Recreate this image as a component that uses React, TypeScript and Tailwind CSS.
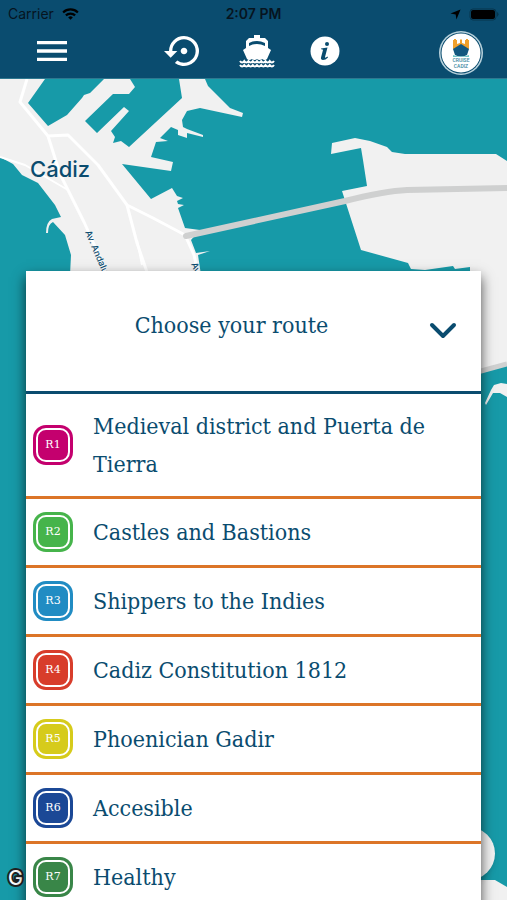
import { IoMdMenu } from "react-icons/io";
import { MdSettingsBackupRestore } from "react-icons/md";

interface Route {
  code: string;
  name: string;
  badge: string;
}

const ROUTES: Route[] = [
  { code: "R1", name: "Medieval district and Puerta de Tierra", badge: "bg-[#c4006e]" },
  { code: "R2", name: "Castles and Bastions", badge: "bg-[#46b44b]" },
  { code: "R3", name: "Shippers to the Indies", badge: "bg-[#218cc3]" },
  { code: "R4", name: "Cadiz Constitution 1812", badge: "bg-[#d83d2b]" },
  { code: "R5", name: "Phoenician Gadir", badge: "bg-[#d6cb1b]" },
  { code: "R6", name: "Accesible", badge: "bg-[#1b4896]" },
  { code: "R7", name: "Healthy", badge: "bg-[#398648]" },
];

function StatusBar() {
  return (
    <div className="grid h-7 grid-cols-3 items-center px-2 font-[Inter,sans-serif] text-sm text-[#06141f]">
      <div className="flex items-center gap-2">
        <span>Carrier</span>
        <svg viewBox="0 0 18 13" className="h-3 w-[17px]" fill="none" stroke="black" strokeWidth="2.4">
          <path d="M1 4.8a11.5 11.5 0 0 1 16 0" />
          <path d="M4 8a7.2 7.2 0 0 1 10 0" />
          <path d="M6.5 10.2a3.6 3.6 0 0 1 5 0L9 12.8z" fill="black" stroke="none" />
        </svg>
      </div>
      <span className="text-center font-semibold">2:07 PM</span>
      <div className="flex items-center justify-end gap-2">
        <svg viewBox="0 0 12 12" className="size-[11px]">
          <path d="M11.5.5 7 11.5 6.2 6 .5 5z" fill="black" />
        </svg>
        <svg viewBox="0 0 30 13" className="h-[13px] w-[30px]">
          <rect x="1" y="1" width="26" height="11" rx="3" fill="none" stroke="#06354d" />
          <rect x="2" y="2" width="24" height="9" rx="2" fill="black" />
          <path d="M28 4q3 2 0 5z" fill="#06354d" />
        </svg>
      </div>
    </div>
  );
}

function ShipIcon() {
  return (
    <svg viewBox="0 0 36 34" className="h-[34px] w-9" fill="none">
      <path
        fill="white"
        d="M15 1h6v3h5l3 3v7l3 2-4 9q-2 2-5 0-2.500 2-5 0-2.500 2-5 0-3 2-5 0L4 16l3-2V7l3-3h5z"
      />
      <path d="M10 12V9q8-4 16 0v3q-8-4-16 0z" fill="#0a4c6f" />
      <path
        stroke="white"
        strokeWidth="2"
        d="M1 27q2 3 4.250 0 2.125 3 4.250 0 2.125 3 4.250 0 2.125 3 4.250 0 2.125 3 4.250 0 2.125 3 4.250 0 2.125 3 4.250 0 2.125 3 4.250 0M1 31q2 3 4.250 0 2.125 3 4.250 0 2.125 3 4.250 0 2.125 3 4.250 0 2.125 3 4.250 0 2.125 3 4.250 0 2.125 3 4.250 0 2.125 3 4.250 0"
      />
    </svg>
  );
}

function InfoIcon() {
  return (
    <svg viewBox="0 0 30 30" className="size-[30px]">
      <circle cx="15" cy="15" r="14.500" fill="white" />
      <circle cx="17" cy="8" r="2" fill="#0a4c6f" />
      <path d="M11 12.500 17.500 11.500 15 21q0 1.500 2.500-.5l.5 1q-2.500 2.500-5 2.500-2.500-.5-2-2.500l2-7.500q0-1-2-.8z" fill="#0a4c6f" />
    </svg>
  );
}

function Logo() {
  return (
    <svg viewBox="0 0 44 44" className="size-11">
      <circle cx="22" cy="22" r="22" fill="#b9d2dc" />
      <circle cx="22" cy="22" r="20.500" fill="#0a4c6f" />
      <circle cx="22" cy="22" r="19.500" fill="white" />
      <path d="M14 18V9h1V8h2v1h1v4l3-1V9l1-1 1 1v3l3 1V9h1V8h2v1h1v9z" fill="#f0a02c" />
      <path d="m22 13 8 5-2 6q-6 3-12 0l-2-6z" fill="#12577f" />
      <path d="M14 24q8 3 16 0v2H14z" fill="#6cc4c6" />
      <g fill="#3987a0" fontFamily="Roboto, sans-serif" fontSize="5" fontWeight="500" textAnchor="middle">
        <text x="22" y="31">CRUISE</text>
        <text x="22" y="37">CADIZ</text>
      </g>
    </svg>
  );
}

function Toolbar() {
  return (
    <nav className="flex h-[50px] items-center justify-between pr-6 pl-8 text-white">
      <button type="button" aria-label="Menu" className="pb-1">
        <IoMdMenu size={40} />
      </button>
      <div className="mr-2 flex items-center gap-[35px] pb-1">
        <button type="button" aria-label="Restart route">
          <MdSettingsBackupRestore size={40} />
        </button>
        <button type="button" aria-label="Cruises">
          <ShipIcon />
        </button>
        <button type="button" aria-label="Information">
          <InfoIcon />
        </button>
      </div>
      <a href="#home" aria-label="Cruise Cadiz">
        <Logo />
      </a>
    </nav>
  );
}

function CityMap() {
  return (
    <svg
      viewBox="0 79 507 821"
      preserveAspectRatio="xMinYMin slice"
      className="absolute inset-0 size-full"
      aria-hidden="true"
    >
      {/* Old town and harbour */}
      <path
        fill="#f1f1f1"
        d="M0 79H205L208 86 230 108 243 113 242 117 200 108 187 111 182 120 183 127 187 129 203 135 203 137 187 133V138L178 135V130L171 127 160 138 168 141 156 142 151 157 173 162 171 171 122 164 151 199 172 188 177 196 183 198 177 201 178 204 184 205 178 208 185 228 200 230 191 240 196 253 210 251 198 255 201 275H70L71 255 65 235 53 222Q48 224 48 233H46Q46 222 52 219L61 217 55 205 38 183 22 175 13 164 0 157Z"
      />
      <path
        fill="#179aa8"
        d="M45 79 28 103 48 126 67 115 82 98 84 95 90 93 104 79ZM130 79 135 87 129 94H113L85 121 97 133 124 107 129 111 111 131 115 137 113 143 121 141 129 147 182 98 179 79Z"
      />
      {/* Streets */}
      <g fill="none" stroke="white" strokeLinejoin="round">
        <path strokeWidth="3" d="M27 79 20 102 48 136 68 135 98 165 127 205 153 218 185 235 194 255 198 273" />
        <path strokeWidth="3" d="M48 136 60 174 84 222 98 253 106 275M127 205 137 243 148 275" />
        <path strokeWidth="2" d="M0 157 25 165 68 190M137 240 142 265" />
      </g>
      {/* East shore */}
      <path
        fill="#f1f1f1"
        d="M331 154 332 143 355 138 370 141 387 147 392 152 405 154H496L507 161V364L470 376V267L455 269 453 266 425 270 411 269 408 263 361 250 342 191 367 186 363 160 361 148Z"
      />
      <path d="M507 364 470 374" stroke="#d0d1d1" strokeWidth="5" />
      <path d="M485 403 491 390 494 385 501 383 507 384V397L500 393 493 393 486 405Z" fill="#f1f1f1" />
      <path d="M470 880H495L507 887V900H470Z" fill="#f1f1f1" />
      {/* Bridge */}
      <path d="M186 236 345 201Q385 191 407 190L507 188" fill="none" stroke="#cfd0d0" strokeWidth="6" strokeLinecap="round" />
      <g fill="#0a4c6f" fontFamily="Inter, sans-serif">
        <text x="30" y="177" fontSize="22" fontWeight="500">Cádiz</text>
        <text x="0" y="0" fontSize="9" fontWeight="500" transform="translate(85 232) rotate(67)">Av. Andalucía</text>
        <text x="0" y="0" fontSize="9" fontWeight="500" transform="translate(191 264) rotate(67)">Av.</text>
      </g>
      <text
        x="8"
        y="885"
        fontSize="20"
        fontWeight="500"
        fill="white"
        stroke="#222"
        strokeWidth="4"
        paintOrder="stroke"
        strokeLinejoin="round"
        fontFamily="Inter, sans-serif"
      >
        G
      </text>
    </svg>
  );
}

function RouteRow({ route }: { route: Route }) {
  return (
    <li className="border-b-3 border-[#dc7527]">
      <button type="button" className="flex min-h-[66px] w-full items-center gap-5 py-[13px] pr-6 pl-[7px] text-left">
        <span className={`flex size-10 shrink-0 rounded-[13px] p-[3px] ${route.badge}`}>
          <span className="flex flex-1 items-center justify-center rounded-[10px] border-2 border-white font-['DejaVu_Serif',serif] text-[11px] text-white">
            {route.code}
          </span>
        </span>
        <span className="leading-[38px]">{route.name}</span>
      </button>
    </li>
  );
}

function RoutePanel() {
  return (
    <section className="relative mx-[26px] mt-48 bg-white font-['DejaVu_Serif_Condensed','DejaVu_Serif',serif] text-[23px] text-[#0a4c6f] shadow-[0_6px_12px_rgba(0,0,0,0.7)]">
      <button
        type="button"
        aria-expanded="true"
        className="flex h-[123px] w-full items-center border-b-3 border-[#0a4c6f] pr-6 pl-2"
      >
        <h1 className="flex-1 pb-3 text-center">Choose your route</h1>
        <svg viewBox="0 0 28 18" className="h-[18px] w-7" fill="none" stroke="currentColor" strokeWidth="4" strokeLinecap="round" strokeLinejoin="round">
          <path d="m3 3 11 11L25 3" />
        </svg>
      </button>
      <ul>
        {ROUTES.map((route) => (
          <RouteRow key={route.code} route={route} />
        ))}
      </ul>
    </section>
  );
}

export default function App() {
  return (
    <div className="flex h-screen flex-col overflow-hidden bg-[#179aa8]">
      <header className="border-b border-[#2e7890] bg-[#0a4c6f]">
        <StatusBar />
        <Toolbar />
      </header>
      <main className="relative min-h-0 flex-1 overflow-hidden">
        <CityMap />
        <button
          type="button"
          aria-label="My location"
          className="absolute right-3 bottom-5 size-[53px] rounded-full bg-[#f1f1f1] shadow-md"
        />
        <RoutePanel />
      </main>
    </div>
  );
}
